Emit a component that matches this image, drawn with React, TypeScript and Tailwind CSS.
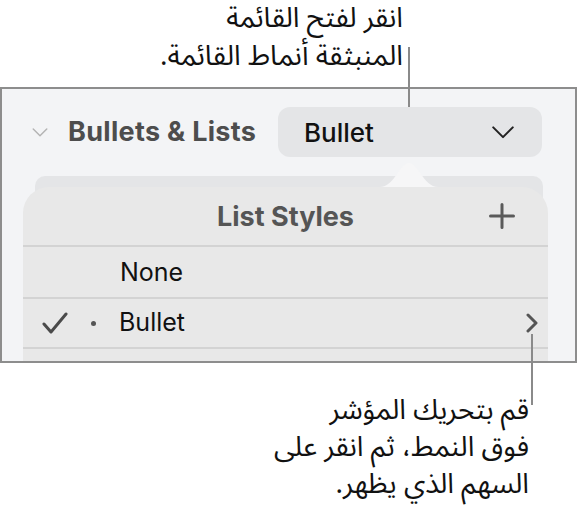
import React from "react";

const arabic = { fontFamily: '"Noto Sans Arabic", "DejaVu Sans", sans-serif' };

function ChevronDown({ className }: { className?: string }) {
  return (
    <svg viewBox="0 0 24 14" className={className} fill="none">
      <path d="M1.5 1.5 L12 12 L22.5 1.5" stroke="currentColor" strokeWidth="2.2" strokeLinecap="round" strokeLinejoin="round" />
    </svg>
  );
}

export default function App() {
  return (
    <div className="relative w-[577px] h-[510px] bg-white overflow-hidden font-['Inter',sans-serif]">
      {/* top callout */}
      <div
        dir="rtl"
        style={arabic}
        className="h-[87px] pr-[174px] text-[28px] leading-[38px] text-[#111] text-right"
      >
        <div>انقر لفتح القائمة</div>
        <div>المنبثقة أنماط القائمة.</div>
      </div>

      {/* inspector panel */}
      <div className="w-[577px] h-[276px] border-2 border-[#8d8d8d] bg-[#f3f4f6] overflow-hidden">
        <div className="flex items-center h-[50px] mt-[18px]">
          <ChevronDown className="w-[16px] h-[9px] ml-[30px] text-[#b3b3b3]" />
          <span className="ml-[20px] text-[27px] font-bold text-[#4d4d4d] tracking-[0.3px]">
            Bullets &amp; Lists
          </span>
          <div className="ml-auto mr-[33px] w-[264px] h-[50px] rounded-[12px] bg-[#e4e5e7] flex items-center pl-[26px] pr-[27px]">
            <span className="text-[26px] font-medium text-[#111]">Bullet</span>
            <ChevronDown className="ml-auto w-[24px] h-[13px] text-[#222]" />
          </div>
        </div>

        <div className="relative mt-[19px]">
          <div className="ml-[33px] w-[508px] h-[60px] rounded-t-[10px] bg-[#e4e5e7]" />

          {/* popover */}
          <div className="absolute left-[21px] top-[11px] w-[525px] h-[200px] rounded-t-[26px] bg-[#e8e8e8]">
            <svg viewBox="0 0 58 24" className="absolute left-[357px] -top-[24px] w-[58px] h-[24px]">
              <path d="M0 24 C14 24 20 0 29 0 C38 0 44 24 58 24 Z" fill="#f6f6f7" />
            </svg>
            <div className="relative h-[58px] flex items-center justify-center">
              <span className="text-[27px] font-bold text-[#555] pt-[2px]">List Styles</span>
              <svg viewBox="0 0 26 26" className="absolute right-[33px] top-[16px] w-[26px] h-[26px]">
                <path d="M13 1.5 V24.5 M1.5 13 H24.5" stroke="#5a5a5a" strokeWidth="3" strokeLinecap="round" />
              </svg>
            </div>
            <div className="h-[2px] bg-[#d3d3d3]" />
            <div className="h-[50px] flex items-center pl-[97px] pt-[2px]">
              <span className="text-[25px] text-[#111]">None</span>
            </div>
            <div className="h-[2px] bg-[#d3d3d3]" />
            <div className="relative h-[48px] flex items-center">
              <svg viewBox="0 0 26 22" className="ml-[19px] w-[26px] h-[22px]">
                <path d="M2 12 L9 20 L24 2" fill="none" stroke="#4a4a4a" strokeWidth="3" strokeLinecap="round" strokeLinejoin="round" />
              </svg>
              <span className="ml-[23px] w-[5px] h-[5px] rounded-full bg-[#555]" />
              <span className="ml-[23px] text-[25px] text-[#111]">Bullet</span>
              <svg viewBox="0 0 12 20" className="ml-auto mr-[10px] w-[12px] h-[20px]">
                <path d="M2 2 L10 10 L2 18" fill="none" stroke="#555" strokeWidth="3" strokeLinecap="round" strokeLinejoin="round" />
              </svg>
            </div>
            <div className="h-[2px] bg-[#d3d3d3]" />
          </div>
        </div>
      </div>

      {/* bottom callout */}
      <div
        dir="rtl"
        style={arabic}
        className="pr-[48px] pt-[29px] text-[28px] leading-[37px] text-[#111] text-right"
      >
        <div>قم بتحريك المؤشر</div>
        <div>فوق النمط، ثم انقر على</div>
        <div>السهم الذي يظهر.</div>
      </div>

      {/* callout lines */}
      <div className="absolute left-[408px] top-[47px] w-[2px] h-[60px] bg-[#8a8a8a]" />
      <div className="absolute left-[531px] top-[334px] w-[2px] h-[71px] bg-[#8a8a8a]" />
    </div>
  );
}
